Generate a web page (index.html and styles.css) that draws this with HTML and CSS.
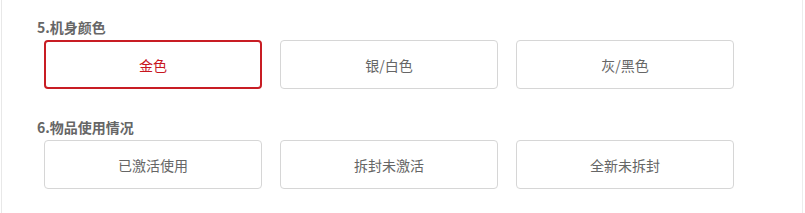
FILE: index.html
```html
<!DOCTYPE html>
<html lang="zh-CN">
<head>
    <meta charset="UTF-8">
    <meta name="viewport" content="width=device-width, initial-scale=1.0">
    <title>物品信息</title>
    <link rel="stylesheet" href="styles.css">
</head>
<body>
    <div class="panel">
        <div class="question">
            <h3>5.机身颜色</h3>
            <div class="options">
                <div class="option selected">金色</div>
                <div class="option">银/白色</div>
                <div class="option">灰/黑色</div>
            </div>
        </div>

        <div class="question">
            <h3>6.物品使用情况</h3>
            <div class="options">
                <div class="option">已激活使用</div>
                <div class="option">拆封未激活</div>
                <div class="option">全新未拆封</div>
            </div>
        </div>
    </div>
</body>
</html>
```

FILE: styles.css
```css
html, body {
    margin: 0;
    padding: 0;
    background: #fff;
}
body {
    font-family: "Noto Sans CJK SC", "Noto Sans", "Liberation Sans", sans-serif;
    color: #666;
}
.panel {
    box-sizing: border-box;
    width: 802px;
    height: 213px;
    margin-left: 1px;
    padding: 17px 0 0 35px;
    border-left: 1px solid #e8e8e8;
    border-right: 1px solid #ececec;
}
.question { margin-bottom: 28px; }
.question h3 {
    margin: 0 0 3px;
    font-size: 14px;
    line-height: 20px;
    font-weight: bold;
    color: #666;
}
.options {
    display: flex;
    gap: 18px;
    padding-left: 7px;
}
.option {
    box-sizing: border-box;
    width: 218px;
    height: 49px;
    display: flex;
    align-items: center;
    justify-content: center;
    border: 1px solid #d6d6d6;
    border-radius: 4px;
    font-size: 14px;
    color: #666;
    cursor: pointer;
}
.option.selected {
    border: 2px solid #c81d24;
    color: #c8161e;
}
```
